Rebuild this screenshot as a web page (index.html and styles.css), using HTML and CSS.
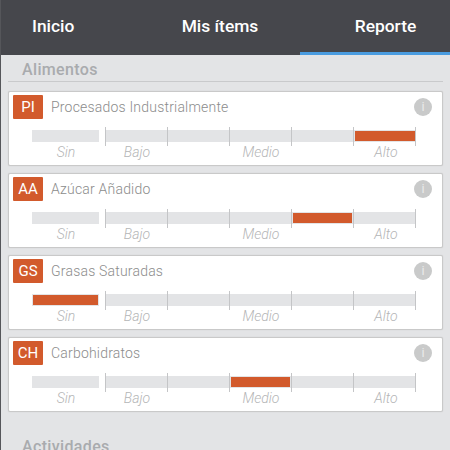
FILE: index.html
```html
<!DOCTYPE html>
<html lang="es">
<head>
    <meta charset="UTF-8">
    <title>Reporte</title>
    <link rel="stylesheet" href="styles.css">
</head>
<body>
    <nav class="tabs">
        <a class="tab tab-first">Inicio</a>
        <a class="tab tab-mid">Mis ítems</a>
        <a class="tab tab-last active">Reporte</a>
    </nav>

    <main class="content">
        <h2 class="section">Alimentos</h2>

        <div class="card">
            <div class="card-head">
                <span class="badge">PI</span>
                <span class="name">Procesados Industrialmente</span>
                <span class="info">i</span>
            </div>
            <div class="track">
                <div class="seg seg-sin"></div>
                <div class="seg"></div>
                <div class="seg"></div>
                <div class="seg"></div>
                <div class="seg"></div>
                <div class="seg seg-end"><div class="fill"></div></div>
            </div>
            <div class="labels">
                <span>Sin</span><span>Bajo</span><span></span><span>Medio</span><span></span><span>Alto</span>
            </div>
        </div>

        <div class="card">
            <div class="card-head">
                <span class="badge">AA</span>
                <span class="name">Azúcar Añadido</span>
                <span class="info">i</span>
            </div>
            <div class="track">
                <div class="seg seg-sin"></div>
                <div class="seg"></div>
                <div class="seg"></div>
                <div class="seg"></div>
                <div class="seg"><div class="fill"></div></div>
                <div class="seg seg-end"></div>
            </div>
            <div class="labels">
                <span>Sin</span><span>Bajo</span><span></span><span>Medio</span><span></span><span>Alto</span>
            </div>
        </div>

        <div class="card">
            <div class="card-head">
                <span class="badge">GS</span>
                <span class="name">Grasas Saturadas</span>
                <span class="info">i</span>
            </div>
            <div class="track">
                <div class="seg seg-sin"><div class="fill"></div></div>
                <div class="seg"></div>
                <div class="seg"></div>
                <div class="seg"></div>
                <div class="seg"></div>
                <div class="seg seg-end"></div>
            </div>
            <div class="labels">
                <span>Sin</span><span>Bajo</span><span></span><span>Medio</span><span></span><span>Alto</span>
            </div>
        </div>

        <div class="card">
            <div class="card-head">
                <span class="badge">CH</span>
                <span class="name">Carbohidratos</span>
                <span class="info">i</span>
            </div>
            <div class="track">
                <div class="seg seg-sin"></div>
                <div class="seg"></div>
                <div class="seg"></div>
                <div class="seg"><div class="fill"></div></div>
                <div class="seg"></div>
                <div class="seg seg-end"></div>
            </div>
            <div class="labels">
                <span>Sin</span><span>Bajo</span><span></span><span>Medio</span><span></span><span>Alto</span>
            </div>
        </div>

        <h2 class="section section-next">Actividades</h2>
    </main>
</body>
</html>
```

FILE: styles.css
```css
html, body {
    height: 100%;
    margin: 0;
    overflow: hidden;
}

body {
    background-color: #e3e4e6;
    font-family: Roboto, "Liberation Sans", sans-serif;
    border-left: 1px solid #55565a;
    box-sizing: border-box;
}

.tabs {
    display: grid;
    grid-template-columns: 150px 150px 150px;
    height: 55px;
    margin-left: -1px;
    background-color: #46474c;
}

.tab {
    color: #fff;
    font-size: 17.4px;
    font-weight: 500;
    line-height: 52px;
    text-align: center;
    box-sizing: border-box;
}

.tab-first {
    text-align: left;
    padding-left: 32px;
}

.tab-mid {
    padding-right: 10px;
}

.tab-last {
    padding-left: 21px;
}

.active {
    border-bottom: 3px solid #4a9ce0;
}

.content {
    padding: 0 7px;
}

.section {
    margin: 0 0 9px;
    padding: 6px 0 2px 14px;
    height: 18px;
    color: #a9abae;
    font-size: 16px;
    font-weight: 500;
    line-height: 18px;
    letter-spacing: 0.35px;
    border-bottom: 1px solid #c9cacc;
}

.section-next {
    margin-top: 20px;
    border-bottom: none;
}

.card {
    height: 75px;
    margin-bottom: 7px;
    box-sizing: border-box;
    background-color: #fff;
    border: 1px solid #c9c9c9;
    border-radius: 2px;
    box-shadow: 0 0 1px #bdbdbd;
    width: 435px;
}

.card-head {
    display: flex;
    align-items: center;
    padding: 3px 10px 0 4px;
}

.badge {
    width: 30px;
    height: 24px;
    margin-right: 8px;
    background-color: #d25a2c;
    border-radius: 1px;
    color: #fff;
    font-size: 15px;
    line-height: 24px;
    text-align: center;
}

.name {
    flex: 1;
    color: #8c8c8c;
    font-size: 14px;
    font-weight: 300;
    letter-spacing: 0.2px;
}

.info {
    width: 18px;
    height: 18px;
    border-radius: 50%;
    background-color: #c9caca;
    color: #e9e9e9;
    font-size: 13px;
    line-height: 18px;
    text-align: center;
}

.track {
    display: grid;
    grid-template-columns: 73px repeat(4, 62px) 63px;
    height: 18px;
    margin: 8px 0 0 23px;
}

.seg {
    display: flex;
    height: 12px;
    margin-top: 3px;
    padding: 1px 1px;
    box-sizing: border-box;
    background-color: #e3e4e6;
    position: relative;
}

.seg::before {
    content: "";
    position: absolute;
    left: 0;
    top: -3px;
    width: 1px;
    height: 19px;
    background-color: #c4c5c7;
}

.seg-sin {
    margin-right: 6px;
}

.seg-sin::before {
    display: none;
}

.seg-end::after {
    content: "";
    position: absolute;
    right: 0;
    top: -3px;
    width: 1px;
    height: 19px;
    background-color: #c4c5c7;
}

.fill {
    flex: 1;
    margin-left: 1px;
    background-color: #d25a2c;
}

.seg-sin .fill {
    margin-left: 0;
}

.labels {
    display: grid;
    grid-template-columns: 74px repeat(4, 62px) 64px;
    margin-left: 23px;
    color: #b4b5b6;
    font-size: 14px;
    font-style: italic;
    font-weight: 300;
    line-height: 14px;
    text-align: center;
}

.labels span:first-child {
    padding-right: 6px;
}
```
